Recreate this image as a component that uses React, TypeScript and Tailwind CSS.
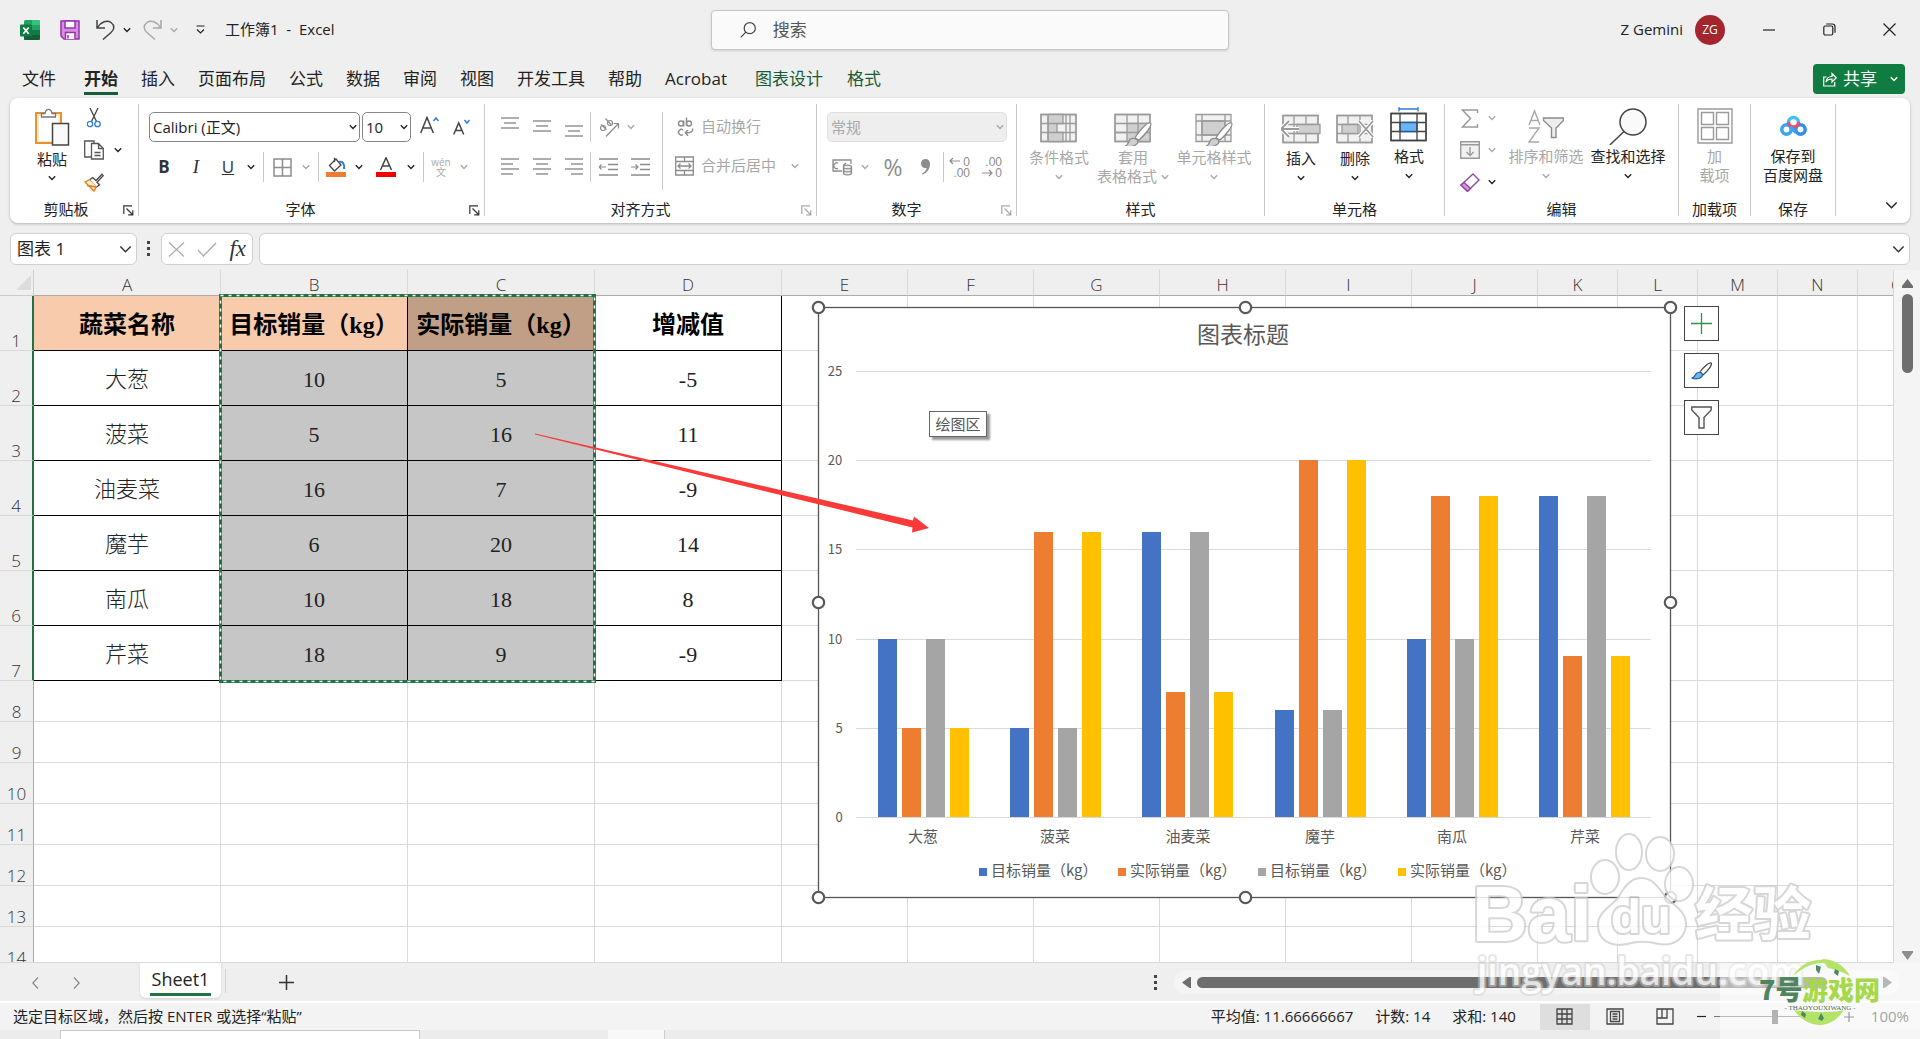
import React from "react";

const UI = "font-['Open_Sans','Noto_Sans_CJK_SC',sans-serif]";
const CN = "'Noto Sans CJK SC', sans-serif";

const data = [
  { name: "大葱", target: 10, actual: 5, diff: -5 },
  { name: "菠菜", target: 5, actual: 16, diff: 11 },
  { name: "油麦菜", target: 16, actual: 7, diff: -9 },
  { name: "魔芋", target: 6, actual: 20, diff: 14 },
  { name: "南瓜", target: 10, actual: 18, diff: 8 },
  { name: "芹菜", target: 18, actual: 9, diff: -9 },
];

const series = [
  { label: "目标销量（kg）", color: "#4472c4", key: "target" as const },
  { label: "实际销量（kg）", color: "#ed7d31", key: "actual" as const },
  { label: "目标销量（kg）", color: "#a5a5a5", key: "target" as const },
  { label: "实际销量（kg）", color: "#ffc000", key: "actual" as const },
];

type P = { children?: React.ReactNode; className?: string };

function Chev({ className = "text-[#222]", size = 8 }: { className?: string; size?: number }) {
  return (
    <svg width={size} height={size} viewBox="0 0 8 8" fill="none" stroke="currentColor" strokeWidth={size > 8 ? 0.9 : 1.4} className={className}>
      <path d="M.8 2.2 4 5.4 7.2 2.2" />
    </svg>
  );
}

function Btn({ children, className = "", label }: P & { label: string }) {
  return (
    <button aria-label={label} className={`flex h-7 shrink-0 items-center justify-center ${className}`}>
      {children}
    </button>
  );
}

function Sep({ className = "h-[30px]" }: P) {
  return <span className={`w-px shrink-0 bg-[#c8c8c8] ${className}`} />;
}

function Launcher({ className = "text-[#333]" }: P) {
  return (
    <button aria-label="更多选项" className={`absolute right-1 bottom-0 ${className}`}>
      <svg width="11" height="11" viewBox="0 0 11 11" fill="none" stroke="currentColor" strokeWidth="1.2">
        <path d="M.8 9V.8H9M3.5 3.5l6 6M9.8 5.2v4.6H5.2" />
      </svg>
    </button>
  );
}

function Group({ title, className, launcher, children }: P & { title: string; launcher?: string }) {
  return (
    <section className={`relative flex shrink-0 flex-col border-r border-[#c8c8c8] ${className}`}>
      <div className="min-h-0 flex-1">{children}</div>
      <h2 className="text-center text-[15px] leading-[14px]">{title}</h2>
      {launcher && <Launcher className={launcher} />}
    </section>
  );
}

function Big({ icon, lines, chevron = true, className = "" }: { icon: React.ReactNode; lines: string[]; chevron?: boolean; className?: string }) {
  return (
    <button className={`flex shrink-0 flex-col items-center text-[15px] leading-[19px] whitespace-nowrap ${className}`}>
      <span className="flex h-[43px] items-center justify-center">{icon}</span>
      <span>{lines[0]}</span>
      {lines[1] ? (
        <span className="flex items-center gap-1">
          {lines[1]}
          {chevron && <Chev className="" />}
        </span>
      ) : (
        <span className="flex h-5 items-center">
          <Chev className="" />
        </span>
      )}
    </button>
  );
}

function Lines({ rows, y }: { rows: number[][]; y: number }) {
  return (
    <svg width="18" height="22" viewBox="0 0 18 22" stroke="#8c8c8c" strokeWidth="1.4">
      {rows.map(([a, b], i) => (
        <path key={i} d={`M${a} ${y + i * 5}H${b}`} />
      ))}
    </svg>
  );
}

function Indent({ right = false }: { right?: boolean }) {
  return (
    <svg width="19" height="20" viewBox="0 0 19 20" stroke="#8c8c8c" strokeWidth="1.4" fill="none">
      <path d="M0 2h19M9 7.5h10M9 12.5h10M0 18h19" />
      <path d={right ? "M0 10h7M4.5 7.5 7 10l-2.5 2.5" : "M7 10H0M2.5 7.5 0 10l2.5 2.5"} strokeWidth="1.2" />
    </svg>
  );
}

function GridBase({ stroke = "#9a9a9a", fill = "#f1f1f1", children }: { stroke?: string; fill?: string; children?: React.ReactNode }) {
  return (
    <svg width="40" height="38" viewBox="0 0 40 38" fill="none" stroke={stroke} strokeWidth="1.3">
      <path d="M2 6.5h35v27H2z" fill={fill} />
      <path d="M2 6.5h35v27H2zM2 15.500h35M2 24.500h35" />
      {children}
    </svg>
  );
}

const brush = (
  <>
    <path d="M22 30c2-4 12-17 15.500-15 2.500 2-6.500 13-11.500 17z" fill="#fff" stroke="#8c8c8c" />
    <path d="M12 38c3-.5 3-4 5-6.500 3-2.500 8-.5 8 2.500-1 4-8 5.500-13 4z" fill="#cfcfcf" stroke="#8c8c8c" />
  </>
);

function TitleBar() {
  return (
    <header className="flex h-[60px] shrink-0 items-center">
      <div className="flex w-[711px] shrink-0 items-center pb-px pl-5">
        <svg width="20" height="20" viewBox="0 0 20 20">
          <rect x="4" width="16" height="20" rx="1.500" fill="#21a366" />
          <path d="M4 5h8v10H4z" fill="#107c41" />
          <path d="M12 0h6.500A1.500 1.500 0 0 1 20 1.500V5h-8z" fill="#33c481" />
          <path d="M12 10h8v5h-8z" fill="#107c41" />
          <path d="M4 15h16v3.500a1.500 1.500 0 0 1-1.500 1.500h-13A1.500 1.500 0 0 1 4 18.500z" fill="#185c37" />
          <rect y="4.500" width="12" height="12" rx="1" fill="#107c41" />
          <path d="m3.300 7.500 5.400 6.200M8.700 7.500l-5.400 6.200" stroke="#fff" strokeWidth="1.700" />
        </svg>
        <Btn label="保存" className="ml-5">
          <svg width="20" height="20" viewBox="0 0 20 20" fill="#d78de0" stroke="#9a2fae" strokeWidth="1.500">
            <path d="M1 1h18v18H4l-3-3z" />
            <path d="M5 1h10v7H5z" fill="#fff" />
            <path d="M5.500 19v-6.500H15V19" fill="#fff" />
            <path d="M8 15v3.500" />
          </svg>
        </Btn>
        <Btn label="撤消" className="ml-4">
          <svg width="19" height="21" viewBox="0 0 19 21" fill="none" stroke="#444" strokeWidth="1.500">
            <path d="M1 1v8h8M1.500 8.500C5 3 11 .5 15 3.500s3.500 7 0 10L7 20.500" />
          </svg>
        </Btn>
        <Btn label="撤消选项" className="ml-2"><Chev /></Btn>
        <Btn label="恢复" className="ml-3 text-[#a8a8a8]">
          <svg width="19" height="21" viewBox="0 0 19 21" fill="none" stroke="currentColor" strokeWidth="1.500">
            <path d="M18 1v8h-8M17.500 8.500C14 3 8 .5 4 3.500s-3.500 7 0 10l8 7" />
          </svg>
        </Btn>
        <Btn label="恢复选项" className="ml-2"><Chev className="text-[#a8a8a8]" /></Btn>
        <Btn label="自定义快速访问工具栏" className="ml-[18px]">
          <svg width="9" height="10" viewBox="0 0 9 10" fill="none" stroke="#222" strokeWidth="1.200">
            <path d="M.5 1h8M1 4.500 4.500 8 8 4.500" />
          </svg>
        </Btn>
        <h1 className="ml-5 text-[15px] whitespace-pre">工作簿1  -  Excel</h1>
      </div>
      <label className="flex h-10 w-[518px] shrink-0 items-center gap-4 rounded border border-[#c6c6c6] bg-[#fafafa] px-7 shadow-sm">
        <svg width="18" height="18" viewBox="0 0 18 18" fill="none" stroke="#444" strokeWidth="1.300">
          <circle cx="10.500" cy="7" r="6" />
          <path d="M6.300 11.300.8 17" />
        </svg>
        <input aria-label="搜索" placeholder="搜索" className="w-full bg-transparent text-[17px] placeholder-[#555] outline-none" />
      </label>
      <div className="flex flex-1 items-center justify-end pr-6 pb-px">
        <span className="text-[15px]">Z Gemini</span>
        <span className="ml-3 flex size-[30px] items-center justify-center rounded-full bg-[#a4262c] text-xs text-white">ZG</span>
        <Btn label="最小化" className="ml-[38px]">
          <svg width="12" height="12" viewBox="0 0 12 12" stroke="#222" strokeWidth="1.200"><path d="M0 6h12" /></svg>
        </Btn>
        <Btn label="还原" className="ml-12">
          <svg width="13" height="13" viewBox="0 0 13 13" fill="none" stroke="#222" strokeWidth="1.200">
            <rect x=".8" y="3" width="9" height="9" rx="1.500" />
            <path d="M3.200 1h6A2.800 2.800 0 0 1 12 3.800v6" />
          </svg>
        </Btn>
        <Btn label="关闭" className="ml-[47px]">
          <svg width="13" height="13" viewBox="0 0 13 13" stroke="#222" strokeWidth="1.200"><path d="m.5.500 12 12M12.500.500l-12 12" /></svg>
        </Btn>
      </div>
    </header>
  );
}

const tabs = ["文件", "开始", "插入", "页面布局", "公式", "数据", "审阅", "视图", "开发工具", "帮助", "Acrobat"];
const chartTabs = ["图表设计", "格式"];

function TabBar() {
  return (
    <nav className="flex h-[38px] shrink-0 items-start justify-between pr-[15px] pl-[22px]">
      <div className="flex text-[17px] leading-[26px]">
        <div className="flex gap-[23px]">
          {tabs.map((t, i) => (
            <button
              key={t}
              className={
                i === 1
                  ? "ml-[5px] h-[35px] border-b-[3px] border-[#185c37] pt-[6px] font-bold"
                  : "h-[35px] border-b-[3px] border-transparent pt-[6px]"
              }
            >
              {t}
            </button>
          ))}
        </div>
        <div className="ml-7 flex gap-6 text-[#185c37]">
          {chartTabs.map((t) => (
            <button key={t} className="h-[35px] border-b-[3px] border-transparent pt-[6px]">
              {t}
            </button>
          ))}
        </div>
      </div>
      <button className="mt-1 flex h-[30px] w-[92px] items-center rounded bg-[#107c41] pl-[10px] text-[17px] leading-[28px] text-white">
        <svg width="14" height="15" viewBox="0 0 14 15" fill="none" stroke="#fff" strokeWidth="1.200">
          <path d="M3.500 5H.7v9h11v-4M3 10c.5-4 3-5.500 6-5.500V1.500l4.300 4.300L9 10V7C6.500 7 4.500 7.500 3 10z" />
        </svg>
        <span className="ml-[6px]">共享</span>
        <Chev className="ml-[13px] text-white" />
      </button>
    </nav>
  );
}

function Clipboard() {
  return (
    <Group title="剪贴板" launcher="text-[#333]" className="w-[129px] pr-4">
      <div className="flex">
        <button className="mt-1 ml-[22px] flex w-10 shrink-0 flex-col items-center text-[15px] leading-[18px]">
          <svg width="36" height="38" viewBox="0 0 36 38" fill="none">
            <path d="M2 5h25v30H2z" fill="#fdebd0" stroke="#e8912d" strokeWidth="2" />
            <path d="M5 8h19v25H5z" fill="#fff" />
            <path d="M7.500 9V5.500h3.500c1-5.500 6-5.500 7 0h3.500V9z" fill="#fff" stroke="#777" strokeWidth="1.300" />
            <path d="M18.500 15.500h16V37h-16z" fill="#fafafa" stroke="#444" strokeWidth="1.500" />
          </svg>
          <span className="mt-1">粘贴</span>
          <Chev className="mt-[6px]" />
        </button>
        <div className="ml-3 flex shrink-0 flex-col gap-1">
          <Btn label="剪切" className="w-5">
            <svg width="14" height="20" viewBox="0 0 14 20" fill="none" strokeWidth="1.300">
              <path d="M3 0l6.500 13.500M11 0 4.500 13.500" stroke="#444" />
              <circle cx="3" cy="16" r="2.700" stroke="#2b7cd3" />
              <circle cx="10.500" cy="16" r="2.700" stroke="#2b7cd3" />
            </svg>
          </Btn>
          <div className="flex">
            <Btn label="复制" className="w-5">
              <svg width="20" height="20" viewBox="0 0 20 20" fill="#fff" stroke="#555" strokeWidth="1.300">
                <path d="M10 3.500V1H.7v16H7M7.500 3.500h7l4.800 5V19H7.500zM14.500 3.500v5h4.800M10.500 12.500h6M10.500 15.500h6" />
              </svg>
            </Btn>
            <Btn label="复制选项" className="w-7"><Chev /></Btn>
          </div>
          <Btn label="格式刷" className="w-5">
            <svg width="20" height="19" viewBox="0 0 20 19" fill="none" strokeWidth="1.300">
              <path d="m1 9 5-2.500 7 6.500-3 5z" fill="#fdebd0" stroke="#e07b12" />
              <path d="M3 12.500 12 14" stroke="#e07b12" />
              <path d="m6 6.500 2.500-2 3.500 3L18 1.200l1.200 1.500-6.200 6.500 2.500 2.500-2.500 2" fill="#fff" stroke="#444" />
            </svg>
          </Btn>
        </div>
      </div>
    </Group>
  );
}

const selBase = "h-[30px] appearance-none rounded-[5px] border pl-[3px] text-[15px] leading-[26px]";

function Select({ label, value, width, disabled = false }: { label: string; value: string; width: string; disabled?: boolean }) {
  return (
    <span className={`relative flex shrink-0 items-center ${width}`}>
      <select
        aria-label={label}
        disabled={disabled}
        className={`${selBase} w-full ${disabled ? "border-[#e0e0e0] bg-[#eeeeee] text-[#a8a8a8]" : "border-[#888] bg-white"}`}
      >
        <option>{value}</option>
      </select>
      <Chev className={`pointer-events-none absolute right-[3px] ${disabled ? "text-[#a8a8a8]" : "text-[#222]"}`} />
    </span>
  );
}

function FontGroup() {
  return (
    <Group title="字体" launcher="text-[#333]" className="w-[346px] pr-8 pl-[10px]">
      <div className="flex items-center gap-[2px] pt-2">
        <Select label="字体" value="Calibri (正文)" width="w-[211px]" />
        <Select label="字号" value="10" width="w-[49px]" />
        <Btn label="增大字号" className="w-8 pb-1">
          <svg width="19" height="18" viewBox="0 0 19 18" fill="none" strokeWidth="1.500">
            <path d="M.7 17 7 1.500 13.300 17M3 12h8" stroke="#444" />
            <path d="m13.500 5 2.500-3 2.500 3" stroke="#2b7cd3" />
          </svg>
        </Btn>
        <Btn label="减小字号" className="w-7">
          <svg width="17" height="16" viewBox="0 0 17 16" fill="none" strokeWidth="1.500">
            <path d="M.7 15.500 5.700 4l5 11.500M2.500 11.500h6.500" stroke="#444" />
            <path d="M11.500 1 14 4l2.500-3" stroke="#2b7cd3" />
          </svg>
        </Btn>
      </div>
      <div className="mt-[10px] flex items-center text-[17px] text-[#333]">
        <Btn label="加粗" className="w-[30px] font-bold">B</Btn>
        <Btn label="倾斜" className="w-[34px] font-['Liberation_Serif',serif] text-[19px] italic">I</Btn>
        <Btn label="下划线" className="w-[30px] underline">U</Btn>
        <Btn label="下划线选项" className="w-4"><Chev /></Btn>
        <Sep className="ml-1 h-[30px]" />
        <Btn label="边框" className="w-9">
          <svg width="19" height="19" viewBox="0 0 19 19" fill="none" stroke="#8c8c8c" strokeWidth="1.500">
            <path d="M1 1h17v17H1zM9.500 1v17M1 9.500h17" />
          </svg>
        </Btn>
        <Btn label="边框选项" className="w-3"><Chev className="text-[#a8a8a8]" /></Btn>
        <Sep className="ml-[6px] h-[30px]" />
        <Btn label="填充颜色" className="w-[34px]">
          <svg width="20" height="20" viewBox="0 0 20 20" fill="none">
            <path d="M3.500 8.500 10 2l5 6-6.500 6zM8.500 5V.8" stroke="#444" strokeWidth="1.300" />
            <path d="M13 5c4-1 5.500 2 5.200 7" stroke="#2b7cd3" strokeWidth="2" />
            <path d="M0 15h20v5H0z" fill="#ed7d31" />
          </svg>
        </Btn>
        <Btn label="填充颜色选项" className="w-3"><Chev /></Btn>
        <Btn label="字体颜色" className="w-[42px]">
          <svg width="20" height="20" viewBox="0 0 20 20" fill="none">
            <path d="M4.500 13 10 .8 15.500 13M6.500 9h7" stroke="#444" strokeWidth="1.500" />
            <path d="M0 15h20v5H0z" fill="#f00000" />
          </svg>
        </Btn>
        <Btn label="字体颜色选项" className="w-2"><Chev /></Btn>
        <Sep className="ml-2 h-[30px]" />
        <Btn label="拼音" className="w-[34px] flex-col text-[10px] leading-[10px] text-[#a8a8a8]">
          <span>wén</span>
          <span>文</span>
        </Btn>
        <Btn label="拼音选项" className="w-3"><Chev className="text-[#a8a8a8]" /></Btn>
      </div>
    </Group>
  );
}

const L3 = [[0, 18], [3, 15], [0, 18]];

function AlignGroup() {
  return (
    <Group title="对齐方式" launcher="text-[#a8a8a8]" className="w-[332px] pr-5">
      <div className="flex pl-[9px]">
        <div>
          <div className="flex items-center pt-2">
            <Btn label="顶端对齐" className="w-8"><Lines rows={L3} y={2} /></Btn>
            <Btn label="垂直居中" className="w-8"><Lines rows={L3} y={5} /></Btn>
            <Btn label="底端对齐" className="w-8"><Lines rows={L3} y={10} /></Btn>
            <Sep className="h-[30px]" />
            <Btn label="方向" className="ml-1 w-7">
              <svg width="21" height="20" viewBox="0 0 21 20" fill="none" stroke="#8c8c8c" strokeWidth="1.200">
                <path d="M7 19.500 19.500 6.500M14.500 6.500h5v5" />
                <circle cx="4" cy="11" r="2.500" /><path d="m2 7.500 5.500 5M6.500 1.500l5.500 6" />
                <circle cx="11" cy="6" r="2.500" />
              </svg>
            </Btn>
            <Btn label="方向选项" className="w-4"><Chev className="text-[#a8a8a8]" /></Btn>
          </div>
          <div className="flex items-center pt-[10px]">
            <Btn label="左对齐" className="w-8"><Lines rows={[[0, 18], [0, 12], [0, 18], [0, 12]]} y={3} /></Btn>
            <Btn label="居中" className="w-8"><Lines rows={[[0, 18], [3, 15], [0, 18], [3, 15]]} y={3} /></Btn>
            <Btn label="右对齐" className="w-8"><Lines rows={[[0, 18], [6, 18], [0, 18], [6, 18]]} y={3} /></Btn>
            <Sep className="h-[30px]" />
            <Btn label="减少缩进量" className="ml-px w-8"><Indent /></Btn>
            <Btn label="增加缩进量" className="w-8"><Indent right /></Btn>
          </div>
        </div>
        <Sep className="mt-2 ml-[6px] h-[78px]" />
        <div className="ml-3 shrink-0 text-[15px] whitespace-nowrap text-[#a8a8a8]">
          <button className="flex h-[41px] items-center gap-[7px] pt-1">
            <svg width="19" height="20" viewBox="0 0 19 20" fill="none" stroke="#8c8c8c" strokeWidth="1.400">
              <circle cx="6" cy="6.500" r="2.500" /><path d="M8.700 3.500v6M11.500.5V9" />
              <circle cx="14" cy="6.500" r="2.500" /><path d="M8 13a2.800 2.800 0 1 0 0 4.500" />
              <path d="M17.500 11.500c1 3-2 4.500-7 4.300M13 13l-2.700 2.800L13 18.700" />
            </svg>
            自动换行
          </button>
          <button className="flex h-[41px] items-center gap-[7px]">
            <svg width="19" height="20" viewBox="0 0 19 20" fill="none" stroke="#8c8c8c" strokeWidth="1.300">
              <path d="M.7 1h17.600v18H.7zM.7 5.500h17.600M.7 14.500h17.600M9.500 1v4.500M9.500 14.500V19M3 10h13M5.500 7.500 3 10l2.500 2.500M13.500 7.500 16 10l-2.500 2.500" />
            </svg>
            合并后居中
            <Chev className="ml-2" />
          </button>
        </div>
      </div>
    </Group>
  );
}

function Decimal({ more = false }: { more?: boolean }) {
  return (
    <svg width="22" height="24" viewBox="0 0 22 24" overflow="visible" fill="#8c8c8c" fontSize="12" fontFamily="'Liberation Sans', sans-serif">
      <text x="21" y="11" textAnchor="end">{more ? ".00" : "0"}</text>
      <text x="21" y="22" textAnchor="end">{more ? "0" : ".00"}</text>
      <path d={more ? "M1 18h10M8 15l3 3-3 3" : "M11 6H1M4 3 1 6l3 3"} fill="none" stroke="#8c8c8c" strokeWidth="1.200" />
    </svg>
  );
}

function NumberGroup() {
  return (
    <Group title="数字" launcher="text-[#a8a8a8]" className="w-[200px] pr-[30px] pl-[10px]">
      <div className="pt-2">
        <Select label="数字格式" value="常规" width="w-[180px]" disabled />
      </div>
      <div className="mt-[10px] flex items-center text-[#8c8c8c]">
        <Btn label="会计数字格式" className="w-[30px]">
          <svg width="21" height="18" viewBox="0 0 21 18" fill="none" stroke="currentColor" strokeWidth="1.300">
            <path d="M19 6V2H1v11h9M6 5a3 3 0 1 0 0 5.500M14 5l-3 3" />
            <path d="M11.500 9v6c0 2.500 8 2.500 8 0V9c0-2.500-8-2.500-8 0zc0 2.500 8 2.500 8 0M11.500 12c0 2.500 8 2.500 8 0" fill="#eee" />
          </svg>
        </Btn>
        <Btn label="会计选项" className="w-4"><Chev className="text-[#a8a8a8]" /></Btn>
        <Btn label="百分比样式" className="ml-[2px] w-9 text-[23px]">%</Btn>
        <Btn label="千位分隔样式" className="w-7">
          <svg width="9" height="16" viewBox="0 0 9 16" fill="currentColor"><path d="M4.500 0C7.500 0 9 2 9 5c0 5-3 9-7.500 10.500l-.5-1C4 13 5.500 11 5.500 9 2 9.500 0 7.500 0 4.500 0 2 2 0 4.500 0z" /></svg>
        </Btn>
        <Sep className="ml-1 h-[30px]" />
        <Btn label="增加小数位数" className="w-8"><Decimal /></Btn>
        <Btn label="减少小数位数" className="w-8"><Decimal more /></Btn>
      </div>
    </Group>
  );
}

function StylesGroup() {
  return (
    <Group title="样式" className="w-[248px]">
      <div className="flex pt-px text-[#a8a8a8]">
        <Big
          className="ml-2 w-[68px]"
          lines={["条件格式"]}
          icon={
            <GridBase>
              <path d="M9 6.500h15v9H9zM9 15.500h9v9H9zM9 24.500h15v9H9z" fill="#cfcfcf" />
              <path d="M9 6.500v27M27 6.500v27M31 6.500v27" />
            </GridBase>
          }
        />
        <Big
          className="w-20"
          lines={["套用", "表格格式"]}
          icon={
            <GridBase>
              <path d="M14 15.500h23v18H14z" fill="#cfcfcf" stroke="none" />
              <path d="M14 6.500v27M25 6.500v27M2 24.500h35M14 15.500h23v18H14" />
              {brush}
            </GridBase>
          }
        />
        <Big
          className="ml-px w-20"
          lines={["单元格样式"]}
          icon={
            <svg width="40" height="38" viewBox="0 0 40 38" fill="none" stroke="#9a9a9a" strokeWidth="1.300">
              <path d="M2 6.500h35v27H2z" fill="#f1f1f1" />
              <path d="M8 13h23v14H8z" fill="#cfcfcf" />
              <path d="M8 6.500v27M31 6.500v27M2 13h35M2 27h35" />
              {brush}
            </svg>
          }
        />
      </div>
    </Group>
  );
}

function CellsGroup() {
  return (
    <Group title="单元格" className="w-[180px]">
      <div className="flex">
        <Big
          className="ml-[9px] w-[54px] pt-[2px]"
          lines={["插入"]}
          icon={
            <GridBase>
              <path d="M13 6.500v27M25 6.500v27" />
              <path d="M16 15.500h23v9H16z" fill="#cfcfcf" />
              <path d="M18 20H1M8 12l-8 8 8 8" stroke="#fff" strokeWidth="4" />
              <path d="M18 20H1M8 12l-8 8 8 8" strokeWidth="1.800" />
            </GridBase>
          }
        />
        <Big
          className="w-[54px] pt-[2px]"
          lines={["删除"]}
          icon={
            <GridBase>
              <path d="M13 6.500v27M25 6.500v27" />
              <path d="M7 15.500h16v9H7z" fill="#cfcfcf" />
              <path d="m24 12 14 16M38 12 24 28" stroke="#fff" strokeWidth="4" />
              <path d="m24 12 14 16M38 12 24 28" strokeWidth="1.800" />
            </GridBase>
          }
        />
        <Big
          className="w-[54px]"
          lines={["格式"]}
          icon={
            <GridBase stroke="#444" fill="#fff">
              <path d="M11 15.500h17v9H11z" fill="#6cb4f5" stroke="#1f5f9e" />
              <path d="M11 6.500v27M28 6.500v27" />
              <path d="M10 2h19M10 0v4.500M29 0v4.500" stroke="#2b7cd3" />
            </GridBase>
          }
        />
      </div>
    </Group>
  );
}

function EditGroup() {
  return (
    <Group title="编辑" className="w-[234px]">
      <div className="flex">
        <div className="ml-3 flex flex-col gap-1 pl-[3px]">
          <div className="flex">
            <Btn label="自动求和" className="w-5">
              <svg width="18" height="19" viewBox="0 0 18 19" fill="none" stroke="#9a9a9a" strokeWidth="1.500"><path d="M16.500 4V1H1.500l8 8.500-8 8.500h15v-3" /></svg>
            </Btn>
            <Btn label="求和选项" className="w-6"><Chev className="text-[#a8a8a8]" /></Btn>
          </div>
          <div className="flex">
            <Btn label="填充" className="w-5">
              <svg width="20" height="18" viewBox="0 0 20 18" fill="#f1f1f1" stroke="#9a9a9a" strokeWidth="1.400"><path d="M.7.7h18.600v16.600H.7zM.7 3.700h18.600M10 6v8.500M6.500 11l3.500 3.500 3.500-3.500" /></svg>
            </Btn>
            <Btn label="填充选项" className="w-6"><Chev className="text-[#a8a8a8]" /></Btn>
          </div>
          <div className="flex">
            <Btn label="清除" className="w-5">
              <svg width="20" height="19" viewBox="0 0 20 19" fill="#fff" stroke="#8e4ba0" strokeWidth="1.400">
                <path d="M13 1 19 7 7.500 18.300 1 12z" />
                <path d="M4 9.500 1 12l6.500 6.300 3-2.800z" fill="#dd8ee6" />
              </svg>
            </Btn>
            <Btn label="清除选项" className="w-6"><Chev /></Btn>
          </div>
        </div>
        <Big
          className="ml-[2px] w-20 text-[#a8a8a8]"
          lines={["排序和筛选"]}
          icon={
            <svg width="36" height="36" viewBox="0 0 36 36" fill="none" stroke="#a8a8a8" strokeWidth="1.400">
              <path d="M1 17 6.500 3 12 17M3 12.500h7M1 20h10L1 34h10" />
              <path d="M15.500 10h20v2.500L28 20v9.500h-4.500V20l-8-7.500z" fill="#eee" stroke="#8c8c8c" />
            </svg>
          }
        />
        <Big
          className="ml-[2px] w-20"
          lines={["查找和选择"]}
          icon={
            <svg width="38" height="38" viewBox="0 0 38 38" fill="#fafafa" stroke="#444" strokeWidth="1.500">
              <circle cx="24" cy="15" r="13" />
              <path d="M15 24.500.8 38" />
            </svg>
          }
        />
      </div>
    </Group>
  );
}

function Ribbon() {
  return (
    <div className="mx-[10px] flex h-[125px] shrink-0 justify-between rounded-lg bg-white pt-[6px] pb-[7px] shadow-[0_1px_3px_rgba(0,0,0,0.25)]">
      <div className="flex">
        <Clipboard />
        <FontGroup />
        <AlignGroup />
        <NumberGroup />
        <StylesGroup />
        <CellsGroup />
        <EditGroup />
        <Group title="加载项" className="w-[72px]">
          <Big
            className="w-full text-[#a8a8a8]"
            lines={["加", "载项"]}
            chevron={false}
            icon={
              <svg width="36" height="36" viewBox="0 0 36 36" fill="none" stroke="#9a9a9a" strokeWidth="1.400">
                <path d="M1 1h34v34H1zM4.500 4.500h12v12h-12zM19.500 4.500h12v12h-12zM4.500 19.500h12v12h-12zM19.500 19.500h12v12h-12z" />
              </svg>
            }
          />
        </Group>
        <Group title="保存" className="w-[85px]">
          <Big
            className="w-full"
            lines={["保存到", "百度网盘"]}
            chevron={false}
            icon={
              <svg width="27" height="22" viewBox="0 0 27 22" fill="none" strokeWidth="3.500">
                <circle cx="6.500" cy="14.500" r="4.700" stroke="#3aa5ee" />
                <circle cx="20.500" cy="14.500" r="4.700" stroke="#2f8fe8" />
                <path d="M8.500 7.500a5 5 0 1 1 10 0" stroke="#3fc1f0" />
                <path d="M8.500 7a5 5 0 0 0 10 0" stroke="#e8506e" />
                <path d="m10 11.500 6 6" stroke="#3aa5ee" />
              </svg>
            }
          />
        </Group>
      </div>
      <button aria-label="折叠功能区" className="mr-3 self-end pb-1"><Chev size={13} /></button>
    </div>
  );
}

function FormulaBar() {
  return (
    <div className="flex h-[47px] shrink-0 items-center pt-[5px] pr-[10px] pl-[10px]">
      <label className="flex h-8 w-[127px] items-center rounded-md border border-[#d0d0d0] bg-white pr-1">
        <input aria-label="名称框" defaultValue="图表 1" className="w-full min-w-0 bg-transparent pl-[6px] text-[17px] outline-none" />
        <Chev size={13} className="shrink-0 text-[#333]" />
      </label>
      <svg width="4" height="16" viewBox="0 0 4 16" fill="#444" className="mx-[10px]"><path d="M0 0h3v3H0zM0 6h3v3H0zM0 12h3v3H0z" /></svg>
      <div className="flex h-8 w-[92px] items-center justify-between rounded-md border border-[#d0d0d0] bg-white px-[6px]">
        <button aria-label="取消"><svg width="17" height="15" viewBox="0 0 17 15" stroke="#a8a8a8" strokeWidth="1.200"><path d="m1 .5 15 14M16 .5 1 14.500" /></svg></button>
        <button aria-label="输入"><svg width="20" height="15" viewBox="0 0 20 15" fill="none" stroke="#a8a8a8" strokeWidth="1.200"><path d="m1 8 5.500 6L19 1" /></svg></button>
        <button aria-label="插入函数" className="font-['Liberation_Serif',serif] text-[23px] leading-6 text-[#333] italic">fx</button>
      </div>
      <label className="ml-[6px] flex h-8 flex-1 items-center rounded-md border border-[#d0d0d0] bg-white pr-1">
        <input aria-label="编辑栏" className="w-full bg-transparent pl-2 text-base outline-none" />
        <Chev size={13} className="text-[#333]" />
      </label>
    </div>
  );
}

const cols = [
  ["A", "w-[187px]"], ["B", "w-[187px]"], ["C", "w-[187px]"], ["D", "w-[187px]"],
  ["E", "w-[126px]"], ["F", "w-[126px]"], ["G", "w-[126px]"], ["H", "w-[126px]"], ["I", "w-[126px]"], ["J", "w-[126px]"],
  ["K", "w-[80px]"], ["L", "w-[80px]"], ["M", "w-[80px]"], ["N", "w-[80px]"], ["O", "w-[80px]"],
];

const cell = "border-r border-b border-[#d9d9d9] p-0";
const dark = "border-r border-b border-black p-0 pt-1 text-center";

function Rest({ n }: { n: number }) {
  return (
    <>
      {Array.from({ length: n }, (_, i) => (
        <td key={i} className={cell} />
      ))}
    </>
  );
}

function RowHead({ n }: { n: number }) {
  return (
    <th
      scope="row"
      className={`border-b border-[#d9d9d9] bg-[#efefef] p-0 align-bottom font-['Open_Sans',sans-serif] text-[17px] leading-[18px] font-light text-[#333] ${
        n <= 7 ? "border-r-2 border-r-[#217346]" : "border-r border-r-[#ababab]"
      }`}
    >
      {n}
    </th>
  );
}

function Grid() {
  return (
    <table className="w-[1916px] table-fixed border-separate border-spacing-0 bg-white">
      <colgroup>
        <col className="w-[34px]" />
        {cols.map(([c, w]) => (
          <col key={c} className={w} />
        ))}
      </colgroup>
      <thead>
        <tr className="h-[26px] bg-[#efefef] text-[17px] leading-5 text-[#333]">
          <th aria-label="全选" className="border-r border-b border-[#ccc] p-0">
            <svg width="15" height="15" viewBox="0 0 15 15" className="ml-4" fill="#dcdcdc"><path d="M15 0v15H0z" /></svg>
          </th>
          {cols.map(([c]) => (
            <th key={c} scope="col" className="border-r border-b border-r-[#d9d9d9] border-b-[#ababab] p-0 pt-[5px] font-light">
              {c}
            </th>
          ))}
        </tr>
      </thead>
      <tbody className="font-['Liberation_Serif','Noto_Sans_CJK_SC',serif] text-[22px] leading-[30px] text-[#222]">
        <tr className="h-[55px] text-[24px] font-bold text-black">
          <RowHead n={1} />
          <td className={`${dark} bg-[#f8cbad]`}>蔬菜名称</td>
          <td className={`${dark} bg-[#f8cbad]`}>目标销量（kg）</td>
          <td className={`${dark} bg-[#c19f86]`}>实际销量（kg）</td>
          <td className={dark}>增减值</td>
          <Rest n={11} />
        </tr>
        {data.map((d, i) => (
          <tr key={d.name} className="h-[55px]">
            <RowHead n={i + 2} />
            <td className={`${dark} font-light`}>{d.name}</td>
            <td className={`${dark} bg-[#c6c6c6]`}>{d.target}</td>
            <td className={`${dark} bg-[#c6c6c6]`}>{d.actual}</td>
            <td className={dark}>{d.diff}</td>
            <Rest n={11} />
          </tr>
        ))}
        {[8, 9, 10, 11, 12, 13, 14].map((n) => (
          <tr key={n} className="h-[41px]">
            <RowHead n={n} />
            <Rest n={15} />
          </tr>
        ))}
      </tbody>
    </table>
  );
}

function Chart() {
  const y = (v: number) => 510 - v * 17.84;
  const legendX = [161, 300, 440, 580];
  return (
    <svg role="img" aria-label="图表标题" width="869" height="607" viewBox="-8 -8 869 607" className="absolute top-[29px] left-[810px]" fontFamily={CN} fill="#595959">
      <rect x=".5" y=".5" width="852" height="590" fill="#fff" stroke="#555" strokeWidth="1.300" />
      <text x="425" y="36" fontSize="23" textAnchor="middle">图表标题</text>
      {[0, 5, 10, 15, 20, 25].map((v) => (
        <g key={v}>
          <path d={`M38 ${Math.round(y(v)) + 0.5}H833`} stroke="#d9d9d9" />
          <text x={v < 10 ? 21 : 17} y={Math.round(y(v)) + 5} fontSize="13" textAnchor="middle">{v}</text>
        </g>
      ))}
      {data.map((d, i) => (
        <g key={d.name}>
          {series.map((s, j) => (
            <rect key={j} x={Math.floor(60.3 + i * 132.3) + j * 24} y={Math.round(y(d[s.key]))} width="19" height={510 - Math.round(y(d[s.key]))} fill={s.color} />
          ))}
          <text x={Math.round(105 + i * 132.3)} y="535" fontSize="15" textAnchor="middle">{d.name}</text>
        </g>
      ))}
      {series.map((s, i) => (
        <g key={i}>
          <rect x={legendX[i]} y="561" width="8" height="8" fill={s.color} />
          <text x={legendX[i] + 12} y="569" fontSize="15">{s.label}</text>
        </g>
      ))}
      {[[0, 0], [427, 0], [852, 0], [0, 295], [852, 295], [0, 590], [427, 590], [852, 590]].map(([cx, cy]) => (
        <circle key={`${cx}-${cy}`} cx={cx + 0.5} cy={cy + 0.5} r="5.700" fill="#fff" stroke="#595959" strokeWidth="2.200" />
      ))}
    </svg>
  );
}

const toolBtn = "flex size-[35px] items-center justify-center border border-[#444] bg-white";

function Sheet() {
  return (
    <main className="flex min-h-0 flex-1">
      <div className="relative min-w-0 flex-1 overflow-hidden border-b border-r border-[#d9d9d9]">
        <Grid />
        <svg width="379" height="391" viewBox="0 0 379 391" fill="none" className="pointer-events-none absolute top-[23px] left-[218px]">
          <rect x="2.500" y="2.500" width="374" height="386" stroke="#217346" strokeWidth="3" />
          <rect x="2.500" y="2.500" width="374" height="386" stroke="#fff" strokeWidth="1.500" strokeDasharray="3 5" />
        </svg>
        <Chart />
        <div role="tooltip" className="absolute top-[141px] left-[929px] flex h-[26px] w-[58px] items-center justify-center border border-[#666] bg-white text-[15px] leading-5 text-[#555] shadow-[3px_3px_2px_#999]">
          绘图区
        </div>
        <div className="absolute top-9 left-[1684px] flex flex-col gap-3">
          <button aria-label="图表元素" className={toolBtn}>
            <svg width="21" height="21" viewBox="0 0 21 21" stroke="#2f9447" strokeWidth="1.300"><path d="M0 10.500h21M10.500 0v21" /></svg>
          </button>
          <button aria-label="图表样式" className={toolBtn}>
            <svg width="21" height="18" viewBox="0 0 21 18" strokeWidth="1.200">
              <path d="M9 10C12 5.500 18 0 20 1s-3 8-8 12z" fill="#fff" stroke="#444" />
              <path d="M.5 16c2.500 0 3-1.500 4-3.500 1.500-3 6-3 7 0 0 4-6 5.500-11 3.500z" fill="#6cb4f5" stroke="#1f5f9e" />
            </svg>
          </button>
          <button aria-label="图表筛选器" className={toolBtn}>
            <svg width="21" height="23" viewBox="0 0 21 23" fill="none" stroke="#555" strokeWidth="1.400"><path d="M.8 1h19.400v3L13 11.500V22H8V11.500L.8 4z" /></svg>
          </button>
        </div>
        <svg width="400" height="110" viewBox="0 0 400 110" className="pointer-events-none absolute top-[160px] left-[532px]" fill="#f93a38">
          <path d="m3 3.500 378 87 1-4 15 11.500-17 4.500.5-5L3 4.500z" />
        </svg>
      </div>
      <div className="flex w-[26px] flex-col items-center justify-between bg-[#f4f4f4] pt-[9px] pb-[3px]">
        <div className="flex flex-col items-center gap-[6px]">
          <svg width="11" height="9" viewBox="0 0 11 9" fill="#6e6e6e"><path d="M5.500 0 11 7v2H0V7z" /></svg>
          <span className="h-[79px] w-[11px] rounded-full bg-[#6e6e6e]" />
        </div>
        <svg width="11" height="9" viewBox="0 0 11 9" fill="#8e8e8e"><path d="M0 0h11v1.500L5.500 9 0 1.500z" /></svg>
      </div>
    </main>
  );
}

function SheetTabs() {
  return (
    <div className="flex h-10 shrink-0 items-start justify-between border-b-2 border-white">
      <div className="flex items-center">
        <Btn label="上一个工作表" className="mt-1 ml-[30px] w-[10px]">
          <svg width="7" height="12" viewBox="0 0 7 12" fill="none" stroke="#8c8c8c" strokeWidth="1.300"><path d="M6 .5.800 6 6 11.500" /></svg>
        </Btn>
        <Btn label="下一个工作表" className="mt-1 ml-[31px] w-[10px]">
          <svg width="7" height="12" viewBox="0 0 7 12" fill="none" stroke="#8c8c8c" strokeWidth="1.300"><path d="M1 .5 6.200 6 1 11.500" /></svg>
        </Btn>
        <button className="ml-[59px] h-[35px] w-[81px] rounded-b-md bg-white px-[10px] shadow-sm">
          <span className="block h-[31px] border-b-[3px] border-[#217346] text-[18px] leading-7">Sheet1</span>
        </button>
        <Sep className="ml-1 h-6 opacity-70" />
        <Btn label="新工作表" className="mt-1 ml-[53px]">
          <svg width="15" height="15" viewBox="0 0 15 15" stroke="#333" strokeWidth="1.500"><path d="M0 7.500h15M7.500 0v15" /></svg>
        </Btn>
      </div>
      <div className="mt-[7px] mr-5 flex h-6 items-center">
        <svg width="4" height="15" viewBox="0 0 4 15" fill="#444"><path d="M0 0h3v3H0zM0 6h3v3H0zM0 12h3v3H0z" /></svg>
        <div className="ml-4 flex h-6 w-[726px] items-center rounded-full bg-[#f4f4f4] px-2">
          <svg width="9" height="11" viewBox="0 0 9 11" fill="#6e6e6e"><path d="M9 0v11H7.500L0 5.500 7.500 0z" /></svg>
          <span className="ml-[6px] h-[11px] w-[630px] rounded-full bg-[#6e6e6e]" />
          <svg width="9" height="11" viewBox="0 0 9 11" fill="#6e6e6e" className="ml-auto"><path d="M0 0v11h1.500L9 5.500 1.500 0z" /></svg>
        </div>
      </div>
    </div>
  );
}

function StatusBar() {
  return (
    <footer className="flex h-[27px] shrink-0 items-center justify-between bg-[#f3f3f3] pr-[11px] pl-[13px] text-[15px]">
      <span>选定目标区域，然后按 ENTER 或选择“粘贴”</span>
      <div className="flex items-center">
        <span>平均值: 11.66666667</span>
        <span className="ml-[22px]">计数: 14</span>
        <span className="ml-[22px]">求和: 140</span>
        <Btn label="普通" className="ml-6 h-[26px] w-[50px] bg-[#dedede]">
          <svg width="17" height="17" viewBox="0 0 17 17" fill="none" stroke="#444" strokeWidth="1.300"><path d="M1 1h15v15H1zM6 1v15M11 1v15M1 6h15M1 11h15" /></svg>
        </Btn>
        <Btn label="页面布局" className="w-[50px]">
          <svg width="18" height="17" viewBox="0 0 18 17" fill="none" stroke="#444" strokeWidth="1.300"><path d="M1 1h16v15H1zM4.500 3.500h9v10h-9zM6.500 6h5M6.500 8.500h5M6.500 11h5" /></svg>
        </Btn>
        <Btn label="分页预览" className="w-[50px]">
          <svg width="18" height="17" viewBox="0 0 18 17" fill="none" stroke="#444" strokeWidth="1.300"><path d="M1 1h16v15H1zM1 10h10V1M6 1v9" /></svg>
        </Btn>
        <Btn label="缩小" className="ml-[7px]"><svg width="9" height="9" viewBox="0 0 9 9" stroke="#222" strokeWidth="1.200"><path d="M0 4.500h9" /></svg></Btn>
        <input
          type="range"
          aria-label="缩放"
          className="ml-2 h-4 w-[122px] appearance-none bg-[linear-gradient(#777,#777)] bg-[length:100%_1px] bg-center bg-no-repeat [&::-webkit-slider-thumb]:h-[14px] [&::-webkit-slider-thumb]:w-[6px] [&::-webkit-slider-thumb]:appearance-none [&::-webkit-slider-thumb]:bg-[#666]"
        />
        <Btn label="放大" className="ml-2"><svg width="10" height="10" viewBox="0 0 10 10" stroke="#333" strokeWidth="1.200"><path d="M0 5h10M5 0v10" /></svg></Btn>
        <span className="ml-[17px] text-[#444]">100%</span>
      </div>
    </footer>
  );
}

function Taskbar() {
  return (
    <div className="flex h-[9px] shrink-0 bg-[#ececec]">
      <div className="ml-[60px] w-[360px] border border-b-0 border-[#c8c8c8] bg-white" />
      <div className="ml-[188px] w-[57px] border-r border-[#ccc] bg-[#f8f8f8]" />
    </div>
  );
}

function Watermarks() {
  return (
    <>
      <svg width="360" height="180" viewBox="1466 826 360 180" className="pointer-events-none absolute right-[94px] bottom-[33px]">
        <g fill="#fff" stroke="#cfcfcf" strokeWidth="4" strokeLinejoin="round" paintOrder="stroke" opacity=".82">
          <ellipse cx="1605" cy="877" rx="13" ry="16" />
          <ellipse cx="1629" cy="852" rx="12" ry="17" />
          <ellipse cx="1660" cy="854" rx="13" ry="16" />
          <ellipse cx="1679" cy="884" rx="13" ry="16" />
          <path d="M1641 879c12 0 17 10 25 20 9 8 20 14 19 27-2 14-14 19-26 17-12-3-20-3-32 0-14 3-28-2-28-18 0-12 12-17 20-27 6-10 12-19 22-19z" />
          <g fontWeight="700" fontFamily="'Liberation Sans', 'Noto Sans CJK SC', sans-serif">
            <text x="1472" y="941" fontSize="77">Bai</text>
            <text x="1611" y="933" fontSize="49">du</text>
            <text x="1695" y="935" fontSize="58" fontFamily={CN}>经验</text>
          </g>
          <text x="1477" y="985" fontSize="37" fontWeight="600" fontFamily="'Open Sans', sans-serif" strokeOpacity=".6">jingyan.baidu.com</text>
        </g>
      </svg>
      <div className="pointer-events-none absolute right-0 bottom-0 h-[76px] w-[200px] bg-white/50" />
      <svg width="130" height="72" viewBox="1756 956 130 72" className="pointer-events-none absolute right-[34px] bottom-[11px]">
        <path d="M1793 976a33 33 0 0 1 57 0c-12-10-20-13-28-13s-17 3-29 13z" fill="#b5e36a" />
        <path d="M1822 959c12 0 23 7 28 17-10-5-16-7-22-8zM1794 1010c10 2 40 3 50 0-8 12-18 15-24 15s-18-3-26-15z" fill="#b5e36a" />
        <g fill="#4d8a63">
          <path d="m1816 965 5 2-2 7-3-4zM1835 969l4 2-1 5-4-3zM1802 1011l4 3-1 4-4-3zM1821 1013l3 5-2 3-4-2z" />
        </g>
        <text x="1759" y="1000" fontSize="27" fontWeight="900" fontFamily={CN} fill="#4f8460">7号</text>
        <text x="1802" y="1000" fontSize="26" fontWeight="900" fontFamily={CN} fill="#a6d84c">游戏网</text>
        <text x="1820" y="1010" fontSize="7" textAnchor="middle" fontFamily="'Liberation Serif', serif" fill="#4c6a4c">- THAOYOUXIWANG -</text>
      </svg>
    </>
  );
}

export default function App() {
  return (
    <div lang="zh-CN" className={`relative flex h-screen flex-col overflow-hidden bg-[#efefef] text-[#222] ${UI}`}>
      <TitleBar />
      <TabBar />
      <Ribbon />
      <FormulaBar />
      <Sheet />
      <SheetTabs />
      <StatusBar />
      <Taskbar />
      <Watermarks />
    </div>
  );
}
